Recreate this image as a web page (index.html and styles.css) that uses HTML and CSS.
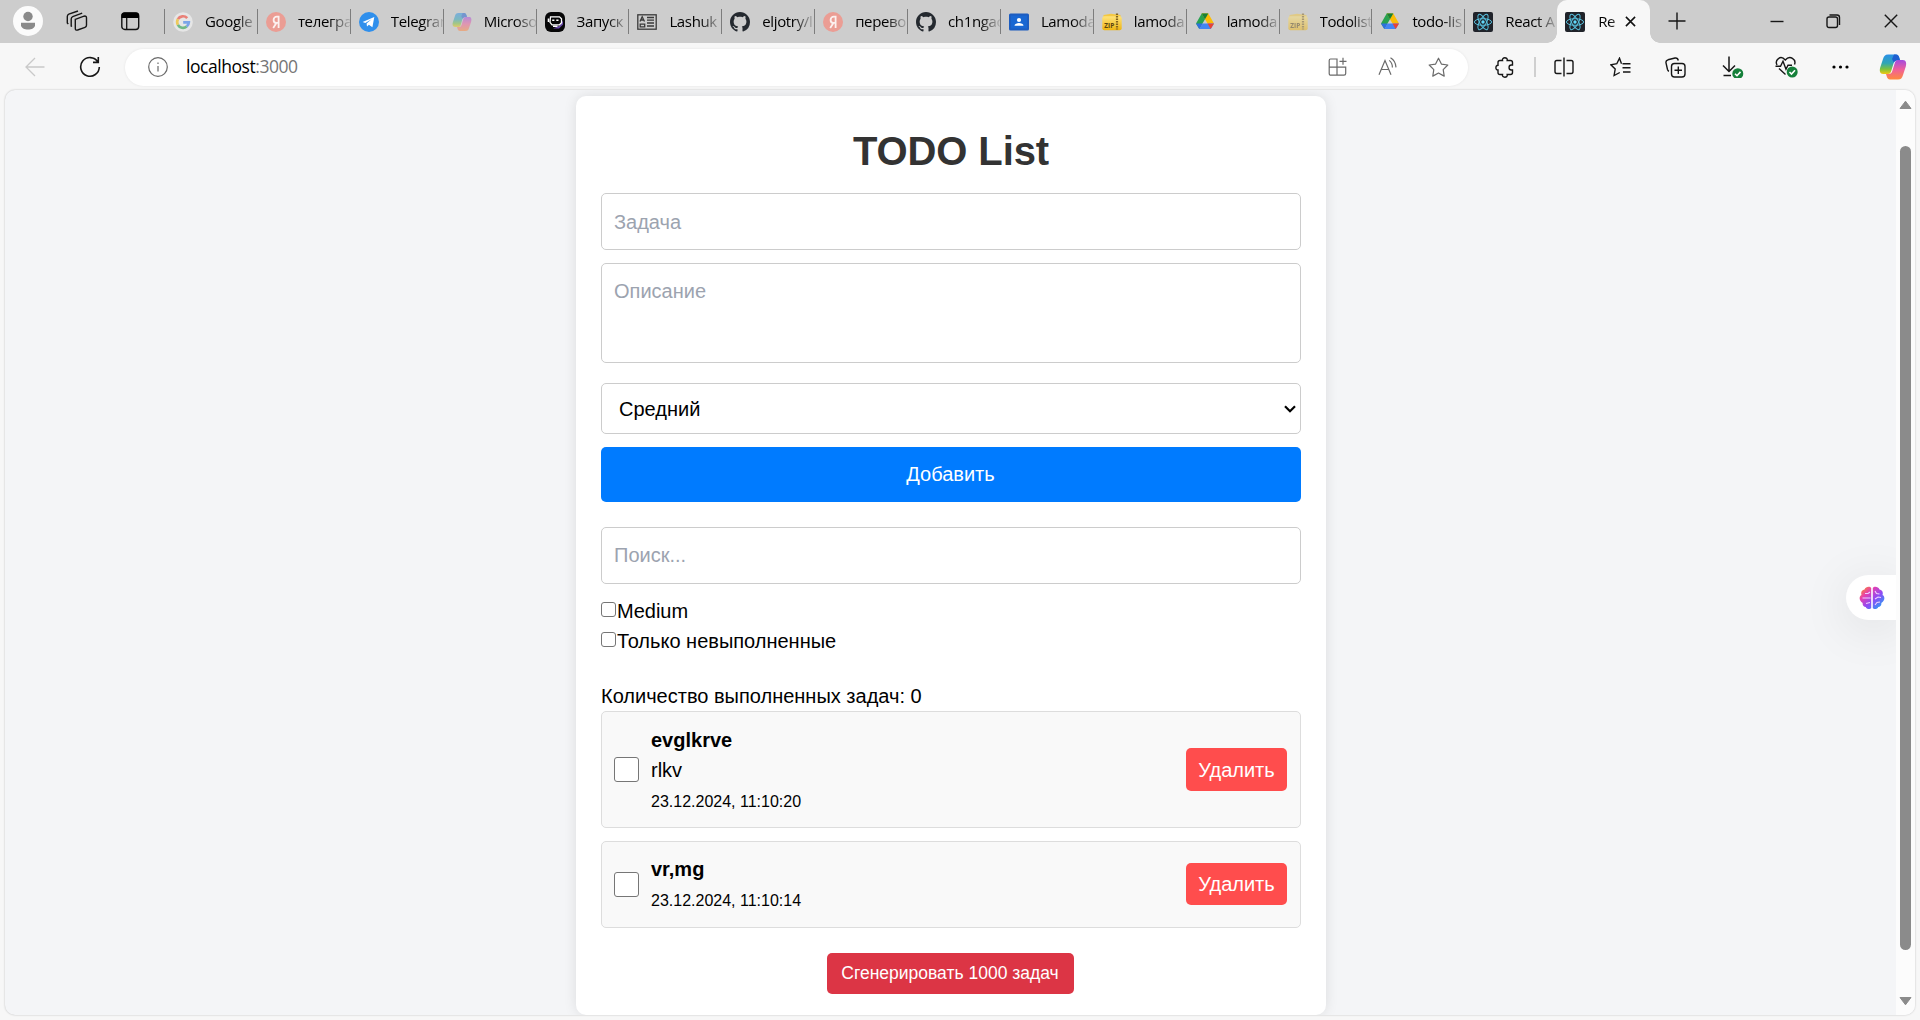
FILE: index.html
```html
<!DOCTYPE html>
<html lang="ru">
<head>
<meta charset="utf-8">
<title>React App</title>
<link rel="stylesheet" href="styles.css">
</head>
<body>
<svg class="defs" width="0" height="0" aria-hidden="true">
  <defs>
    <linearGradient id="g-blue" x1="0" y1="0" x2="0" y2="1"><stop offset="0" stop-color="#2a8fe8"/><stop offset=".45" stop-color="#2fa6b5"/><stop offset=".75" stop-color="#7cc23d"/><stop offset="1" stop-color="#f2c811"/></linearGradient>
    <linearGradient id="g-pink" x1="0" y1="0" x2="0" y2="1"><stop offset="0" stop-color="#a34be0"/><stop offset=".5" stop-color="#f0609a"/><stop offset="1" stop-color="#ff8a3c"/></linearGradient>
    <linearGradient id="g-brain" x1="0" y1="0" x2="1" y2="1"><stop offset=".05" stop-color="#ff8a2a"/><stop offset=".3" stop-color="#e53fb0"/><stop offset=".58" stop-color="#8f4bf5"/><stop offset=".9" stop-color="#2a9df5"/></linearGradient>
    <linearGradient id="g-zip" x1="0" y1="0" x2="0" y2="1"><stop offset="0" stop-color="#ffe37a"/><stop offset="1" stop-color="#eeb512"/></linearGradient>
  </defs>
  <symbol id="i-google" viewBox="0 0 20 20"><circle cx="10" cy="10" r="9.8" fill="#e6e6e6"/><g fill="none" stroke-width="2.7"><path d="M14.2 6.1A5.8 5.8 0 0 0 4.9 7.2" stroke="#e98077"/><path d="M4.9 7.2a5.8 5.8 0 0 0 0 5.6" stroke="#edc95c"/><path d="M4.9 12.8a5.8 5.8 0 0 0 8.8 1.7" stroke="#71b986"/><path d="M13.7 14.5a5.8 5.8 0 0 0 2.1-4.1h-5.6" stroke="#7ba5e8"/></g></symbol>
  <symbol id="i-yandex" viewBox="0 0 20 20"><circle cx="10" cy="10" r="10" fill="#eb9d94"/><path d="M12.6 16V4.7h-1.7c-2 0-3.3 1.2-3.3 3.2 0 1.900 1 3 3 3h2M10.4 10.9 7.2 16" fill="none" stroke="#fff" stroke-opacity=".85" stroke-width="1.8"/></symbol>
  <symbol id="i-telegram" viewBox="0 0 20 20"><circle cx="10" cy="10" r="10" fill="#2f8fec"/><path d="M3.6 9.9 15.3 5.1 13.4 15.3 9.9 12.7 8 14.5 7.6 11.5 12.6 7.3 6.3 11z" fill="#fff"/></symbol>
  <symbol id="i-copilot" viewBox="0 0 28 28"><path d="M9 1.5h8c2 0 2.8 1.5 3.3 3.2L21 7h-2.5c-2.2 0-3.3 1.2-3.9 3.3l-2.3 7.4c-.5 1.8-1.3 3.3-3.3 3.3H4.200C.8 21 .3 18 1.200 14.500L4 6C5 3 6 1.500 9 1.500z" fill="url(#g-blue)"/><path d="M15 1.500h2c2 0 2.800 1.500 3.300 3.200L21 7.500h-2.500c-1.800 0-3 .8-3.600 2.300L13 6z" fill="#1f5fd0"/><path d="M19 26.500h-8c-2 0-2.800-1.500-3.300-3.200L7 21h2.500c2.200 0 3.300-1.200 3.900-3.300l2.300-7.400C16.200 8.500 17 7 19 7h4.800c3.400 0 3.900 3 3 6.500L24 22c-1 3-2 4.500-5 4.500z" fill="url(#g-pink)"/></symbol>
  <symbol id="i-bot" viewBox="0 0 20 20"><rect width="20" height="20" rx="6" fill="#070708"/><path d="M8 16.500h6l4-4v-4l-3 5z" fill="#6a49ad"/><path d="M5.500 4.800h9l2 2v4l-2 2H7l-2-2.500z" fill="none" stroke="#fff" stroke-width="1.300"/><path d="M3.500 6.500v3.500M7.200 8.300h2.200M11.300 8.300h2.200M8 14.300h4.500" stroke="#fff" stroke-width="1.600"/></symbol>
  <symbol id="i-card" viewBox="0 0 20 20"><g fill="none" stroke="#3a3a3a" stroke-width="1.300"><rect x=".8" y="2.800" width="18.400" height="14.400"/><path d="M3 9.500 5.200 4.700 7.500 9.500M3.800 8h2.900M10 5.500h7M10 8.200h7M10 11h7M10 14h7M3.200 12.200h4.500v2.600H3.200z"/></g></symbol>
  <symbol id="i-github" viewBox="0 0 16 16"><path fill="#24292f" d="M8 0C3.580 0 0 3.580 0 8c0 3.540 2.290 6.530 5.470 7.590.4.070.55-.17.55-.38 0-.19-.010-.820-.010-1.490-2.010.370-2.530-.490-2.690-.940-.090-.230-.480-.940-.820-1.130-.280-.150-.680-.520-.010-.530.630-.010 1.080.580 1.230.820.720 1.210 1.870.870 2.330.660.070-.520.280-.870.510-1.070-1.780-.2-3.640-.890-3.640-3.950 0-.870.310-1.590.820-2.150-.080-.2-.360-1.020.080-2.120 0 0 .670-.210 2.200.820.640-.180 1.320-.270 2-.270s1.360.090 2 .270c1.530-1.040 2.200-.820 2.200-.820.440 1.100.160 1.920.080 2.120.510.560.820 1.270.820 2.150 0 3.070-1.870 3.750-3.650 3.950.290.250.540.730.540 1.480 0 1.070-.010 1.930-.010 2.200 0 .210.150.460.550.380A8.010 8.010 0 0 0 16 8c0-4.420-3.580-8-8-8z"/></symbol>
  <symbol id="i-classroom" viewBox="0 0 20 20"><rect y="1.500" width="20" height="17" rx="1.500" fill="#1d5dc0"/><rect x="2" y="3.500" width="16" height="13" fill="#1967d2"/><circle cx="10" cy="8" r="2.100" fill="#fff"/><path d="M5.500 13.800c0-3.600 9-3.600 9 0z" fill="#fff"/></symbol>
  <symbol id="i-zip" viewBox="0 0 20 20"><path d="M1.500 3 9 1.800 18.500 3v3H1.500z" fill="#f3c843"/><rect x=".3" y="4.200" width="19.400" height="14" rx="2" fill="url(#g-zip)"/><path d="M15 1.500v16" stroke="#80621e" stroke-width="2.200" stroke-dasharray="1.500 1"/><text x="2.300" y="16" class="zip-text">ZIP</text></symbol>
  <symbol id="i-drive" viewBox="0 0 20 20"><path d="M6.700 1.500h6.600L4.300 17 1 11.400z" fill="#27a250"/><path d="M6.700 1.500h6.600L19 11.400h-6.500z" fill="#fbbc04"/><path d="M10 7.200 6.700 1.500h6.600z" fill="#188038"/><path d="M4.300 17 7.600 11.400H19L15.700 17z" fill="#4285f4"/><path d="M12.500 11.400H19L15.700 17z" fill="#ea4335"/><path d="M4.300 17 1 11.400h6.600z" fill="#2f6fdf"/></symbol>
  <symbol id="i-react" viewBox="0 0 20 20"><rect width="20" height="20" rx="2" fill="#20232a"/><g fill="none" stroke="#58bfdc" stroke-width="1"><ellipse cx="10" cy="10" rx="8.600" ry="3.300"/><ellipse cx="10" cy="10" rx="8.600" ry="3.300" transform="rotate(60 10 10)"/><ellipse cx="10" cy="10" rx="8.600" ry="3.300" transform="rotate(120 10 10)"/></g><circle cx="10" cy="10" r="1.700" fill="#61dafb"/></symbol>
</svg>

<header class="tabstrip">
  <div class="cell profile"><svg width="30" height="30"><circle cx="15" cy="15" r="15" fill="#fbfbfb"/><circle cx="15" cy="10.500" r="4.700" fill="#8a8a8a"/><path d="M8 16.700h14v2.500c0 5.700-14 5.700-14 0z" fill="#8a8a8a"/></svg></div>
  <div class="cell workspaces"><svg class="line" width="22" height="22" viewBox="0 0 22 22"><path d="M9.300 9.300 18 6.200q2.500-.6 2.500 1.600v7.500q0 1.500-1.500 2L11.600 20q-2.300.7-2.300-1.500zM6 16.500 5.200 16V9q0-1.800 1.500-2.400l9.500-3.400M2.300 14 1.300 13V6.500q0-1.700 1.500-2.300L12 1"/></svg></div>
  <div class="cell actions"><svg width="19" height="19"><rect x=".8" y="1" width="16.900" height="16.500" rx="3" fill="none" stroke="#111" stroke-width="1.400"/><path d="M.5 6V3.500Q.5.500 3.500.500h11.500q3 0 3 3V6z"/><path d="M5.700 6v11" stroke="#111" stroke-width="1.300"/></svg></div>
  <nav class="tabs">
    <div class="tab"><svg><use href="#i-google"/></svg><span>Google</span></div>
    <div class="tab"><svg><use href="#i-yandex"/></svg><span>телегра</span></div>
    <div class="tab"><svg><use href="#i-telegram"/></svg><span>Telegram</span></div>
    <div class="tab"><svg class="faded"><use href="#i-copilot"/></svg><span>Microso</span></div>
    <div class="tab"><svg><use href="#i-bot"/></svg><span>Запуск</span></div>
    <div class="tab"><svg><use href="#i-card"/></svg><span>Lashuk</span></div>
    <div class="tab"><svg><use href="#i-github"/></svg><span>eljotry/l</span></div>
    <div class="tab"><svg><use href="#i-yandex"/></svg><span>перево</span></div>
    <div class="tab"><svg><use href="#i-github"/></svg><span>ch1ngac</span></div>
    <div class="tab"><svg><use href="#i-classroom"/></svg><span>Lamoda</span></div>
    <div class="tab"><svg><use href="#i-zip"/></svg><span>lamoda</span></div>
    <div class="tab"><svg><use href="#i-drive"/></svg><span>lamoda</span></div>
    <div class="tab"><svg class="faded"><use href="#i-zip"/></svg><span>Todolist</span></div>
    <div class="tab"><svg><use href="#i-drive"/></svg><span>todo-lis</span></div>
    <div class="tab"><svg><use href="#i-react"/></svg><span>React A</span></div>
    <div class="tab active"><svg><use href="#i-react"/></svg><span>Re</span><svg class="tab-close" viewBox="0 0 12 12"><path d="m1 1 10 10M11 1 1 11"/></svg></div>
  </nav>
  <div class="cell newtab"><svg class="line" width="18" height="18"><path d="M9 .5v17M.5 9h17"/></svg></div>
  <div class="window-buttons">
    <div class="cell"><svg class="line" width="14" height="14"><path d="M.5 7.500h13"/></svg></div>
    <div class="cell"><svg class="line" width="15" height="15"><rect x="1" y="3" width="10.500" height="10.500" rx="2"/><path d="M3.500 1h7.500Q13.500 1 13.500 3.500V11"/></svg></div>
    <div class="cell"><svg class="line" width="14" height="14"><path d="m.8.800 12.400 12.400M13.200.800.800 13.200"/></svg></div>
  </div>
</header>

<div class="toolbar">
  <div class="cell back"><svg width="20" height="20"><path d="M19.500 10H1M10 1 1 10l9 9" fill="none" stroke="#c9c9c9" stroke-width="1.300"/></svg></div>
  <div class="cell reload"><svg class="line" width="22" height="22" viewBox="0 0 22 22"><path d="M18.800 5.800A9.300 9.300 0 1 0 20.300 11M19.300 1v5.400H14" stroke-width="1.600"/></svg></div>
  <div class="address">
    <svg class="line info" width="20" height="20"><circle cx="10" cy="10" r="9.300"/><path d="M10 9v5.500M10 5.500v1.600"/></svg>
    <div class="url">localhost<span>:3000</span></div>
    <div class="cell"><svg class="line gray" width="20" height="20"><path d="M2.500 2h6.500v16.200H3q-1.800 0-1.800-1.800V3.500Q1.200 2 2.500 2zM1.200 10.200h16.500v6.300q0 1.700-1.700 1.700H9M15 .8v7M11.500 4.300h7"/></svg></div>
    <div class="cell"><svg class="line gray" width="20" height="20"><path d="M1 17.800 7 3.500l6 14.300M3.200 12.500h7.600M11.200 3.400q3.200 2.600 3.200 7M12.500.7q5.200 3 5.500 9.700"/></svg></div>
    <div class="cell"><svg class="line gray" width="21" height="21" viewBox="0 0 21 21"><path d="m10.500 1.200 2.900 5.900 6.400.9-4.600 4.600 1 6.500-5.700-3.100-5.700 3.100 1-6.500L1.200 8l6.400-.9z" stroke-linejoin="round"/></svg></div>
  </div>
  <div class="cell puzzle"><svg class="line" width="20" height="21" viewBox="0 0 20 21"><path d="M3 5.500q0-2 2-2h2.500C7 1.500 8.500.8 9.800.8s2.900.7 2.400 2.700h3.300q2 0 2 2V8h-1.200c-3 0-3 5 0 5h1.200v2.500q0 2-2 2h-3.300c.5 2-1 2.700-2.400 2.700s-2.800-.7-2.300-2.700H5q-2 0-2-2V13C.2 13.400.2 8.200 3 8.200z"/></svg></div>
  <i class="rule"></i>
  <div class="cell w56"><svg class="line" width="20" height="20"><path d="M7.500 3.500H2.800Q1 3.500 1 5.500v9Q1 16.500 2.800 16.500h4.700M12.500 3.500h4.700Q19 3.500 19 5.500v9q0 2-1.800 2h-4.700M10 .500v19"/></svg></div>
  <div class="cell w56"><svg class="line" width="21" height="20"><path d="M11.500 6.700 9.500 1.200 6.800 6.700.800 7.800l4.400 4.300L4.100 18.500l5.700-3M12.500 6.700h8M12.500 10.800h8M13 15h7.500"/></svg></div>
  <div class="cell w55"><svg class="line" width="21" height="21"><rect x="6.500" y="6.500" width="13.500" height="13.500" rx="3"/><path d="M13.300 9.500v7.500M9.500 13.300h7.500M4 14.200Q3 14 2.500 12.500L1 5.800Q.6 3.500 3 2.800L10 1q2.700-.5 3.300 2.500"/></svg></div>
  <div class="cell w60"><svg class="line" width="22" height="22" viewBox="0 0 22 22"><path d="M7 .5v15M1 9.500l6 6 6-6M1.500 19.500h7.500" stroke-width="1.500"/><circle cx="15.800" cy="17.700" r="5.500" class="ok"/><path d="m13 17.700 2 2 3.500-3.800" class="tick"/></svg></div>
  <div class="cell w46"><svg class="line" width="23" height="22" viewBox="0 0 23 22"><path d="M2 9C-.5 4 5.500-1.500 10.300 4 15-1.500 21.500 3.500 19.500 8.500M.5 10.200h5l2.500-5 3 8 2-4h4M4 12.500l6.500 6"/><circle cx="17.200" cy="16" r="5.500" class="ok"/><path d="m14.500 16 2 2 3.500-3.800" class="tick"/></svg></div>
  <div class="cell w62"><svg width="17" height="4"><circle cx="2" cy="2" r="1.600"/><circle cx="8.500" cy="2" r="1.600"/><circle cx="15" cy="2" r="1.600"/></svg></div>
  <div class="cell w44"><svg width="28" height="28"><use href="#i-copilot"/></svg></div>
</div>

<div class="viewport">
  <main class="page">
    <section class="card">
      <h1>TODO List</h1>
      <input class="field title" type="text" placeholder="Задача">
      <textarea class="field area" placeholder="Описание"></textarea>
      <div class="select field"><span>Средний</span><svg width="12" height="8"><path d="m1 1.200 5 5 5-5"/></svg></div>
      <button class="add">Добавить</button>
      <input class="field search" type="text" placeholder="Поиск...">
      <label class="filter"><input type="checkbox">Medium</label>
      <label class="filter"><input type="checkbox">Только невыполненные</label>
      <p class="count">Количество выполненных задач: 0</p>
      <ul class="tasks">
        <li><input type="checkbox"><div class="info-col"><b>evglkrve</b><span>rlkv</span><small>23.12.2024, 11:10:20</small></div><button class="delete">Удалить</button></li>
        <li><input type="checkbox"><div class="info-col"><b>vr,mg</b><small>23.12.2024, 11:10:14</small></div><button class="delete">Удалить</button></li>
      </ul>
      <button class="generate">Сгенерировать 1000 задач</button>
    </section>
    <div class="assistant"><svg width="26" height="24" viewBox="0 0 26 24"><path fill="url(#g-brain)" d="M12.200 2v20c-1 1.500-4.500 1.500-5.500-1-2 0-3.500-2-3-4C0 15-.3 10.500 2.500 9 1.500 6 3 3.800 5.500 3.500 6.500.500 11 0 12.200 2zM13.800 2v20c1 1.500 4.500 1.500 5.500-1 2 0 3.500-2 3-4 3.700-2 4-6.500 1.200-8 1-3-.5-5.200-3-5.500-1-3-5.500-3.500-6.700-1.500z"/><path d="M3.500 12h8M6 7.500h3l2-1.500M7 17.500l4-1M16 5l1.500 2.500 3 .5M16 13l3-2 3 .5M16 19l2-2.500 3-.5" fill="none" stroke="#f0cfff" stroke-width="1.100"/></svg></div>
  </main>
  <aside class="scrollbar">
    <svg width="13" height="10"><path d="M6.500 1.200 12 8.500H1z"/></svg>
    <div class="thumb"></div>
    <svg width="13" height="10"><path d="M6.500 8.800 12 1.500H1z"/></svg>
  </aside>
</div>
</body>
</html>
```
FILE: styles.css
```css
* { box-sizing: border-box; }

body {
  margin: 0;
  width: 1920px;
  height: 1020px;
  overflow: hidden;
  display: flex;
  flex-direction: column;
  background: #f7f7f7;
  font-family: "Liberation Sans", Arial, sans-serif;
  font-size: 20px;
  line-height: 30px;
  color: #000;
}

svg { display: block; flex: none; }
.defs { position: absolute; }
.cell { display: flex; align-items: center; justify-content: center; flex: none; }
.line { fill: none; stroke: #161616; stroke-width: 1.4; }
.gray, .info { stroke: #6a6a6a; stroke-width: 1.2; }
.zip-text { font: bold 6.5px "Open Sans", sans-serif; fill: #5b4510; }

/* Tab strip */
.tabstrip {
  height: 43px;
  flex: none;
  display: flex;
  background: #cdcdcd;
  font-family: "Open Sans", "Noto Sans", sans-serif;
  font-size: 15px;
  line-height: 20px;
}
.profile { width: 56px; padding-bottom: 1px; }
.workspaces { width: 42px; padding-bottom: 1px; }
.actions { width: 66px; padding: 0 2px 1px 0; }
.tabs {
  width: 1486px;
  flex: none;
  display: grid;
  grid-template-columns: repeat(16, minmax(0, 1fr));
}
.tab {
  min-width: 0;
  height: 25px;
  margin-top: 9px;
  padding-left: 8px;
  display: flex;
  align-items: center;
  border-left: 1px solid #7d7d7d;
}
.tab svg { width: 20px; height: 20px; }
.tab span {
  margin: -2px 0 0 12px;
  flex: 1;
  min-width: 0;
  white-space: nowrap;
  overflow: hidden;
  letter-spacing: -.35px;
  mask-image: linear-gradient(90deg, #000 60%, transparent 105%);
}
.tab .faded { opacity: .5; }
.tab.active {
  position: relative;
  height: 43px;
  margin: 0;
  padding: 0 14px 0 8px;
  border-left: 0;
  border-radius: 10px 10px 0 0;
  background: #f7f7f7;
}
.tab.active::before, .tab.active::after {
  content: "";
  position: absolute;
  bottom: 0;
  width: 10px;
  height: 10px;
}
.tab.active::before { left: -10px; background: radial-gradient(circle at 0 0, #cdcdcd 9.5px, #f7f7f7 10px); }
.tab.active::after { right: -10px; background: radial-gradient(circle at 100% 0, #cdcdcd 9.5px, #f7f7f7 10px); }
.tab.active span { mask-image: linear-gradient(90deg, #000 40%, #0008 80%); margin-left: 13px; }
.tab .tab-close { width: 11px; height: 11px; fill: none; stroke: #111; stroke-width: 1.7; }
.newtab { width: 54px; padding-bottom: 1px; }
.window-buttons { display: flex; margin-left: auto; }
.window-buttons .cell { width: 57px; padding: 0 2px 1px 0; }

/* Toolbar */
.toolbar { height: 47px; padding-top: 1px; flex: none; display: flex; align-items: center; }
.toolbar > .cell { height: 46px; }
.back { width: 70px; }
.reload { width: 40px; }
.address {
  width: 1343px;
  height: 37px;
  margin-left: 15px;
  padding: 0 5px 0 23px;
  display: flex;
  align-items: center;
  border-radius: 19px;
  background: #fff;
  box-shadow: 0 0 3px rgba(0, 0, 0, .08);
}
.address .cell { width: 50px; }
.url {
  flex: 1;
  margin: -2px 0 0 18px;
  font: 17.5px/24px "Open Sans", "Noto Sans", sans-serif;
  letter-spacing: -.45px;
}
.url span { color: #767676; }
.puzzle { width: 66px; padding-left: 7px; }
.rule { width: 2px; height: 20px; background: #cfcfcf; }
.w44 { width: 44px; }
.w46 { width: 46px; }
.w55 { width: 55px; }
.w56 { width: 56px; }
.w60 { width: 60px; }
.w62 { width: 62px; }
.ok { fill: #15803a; stroke: none; }
.tick { stroke: #fff; stroke-width: 1.6; }

/* Browser viewport */
.viewport {
  height: 925px;
  margin: 0 5px;
  flex: none;
  display: flex;
  overflow: hidden;
  border-radius: 10px;
  background: #f4f5f7;
  box-shadow: 0 0 2px rgba(0, 0, 0, .25);
}
.page { position: relative; flex: 1; padding-top: 6px; overflow: hidden; }

.card {
  width: 750px;
  height: 919px;
  margin-left: 571px;
  padding: 25px;
  display: flex;
  flex-direction: column;
  border-radius: 10px;
  background: #fff;
  box-shadow: 0 0 13px rgba(0, 0, 0, .1);
}
h1 {
  margin: 0 0 12px;
  font-size: 40px;
  line-height: 60px;
  letter-spacing: -.1px;
  text-align: center;
  color: #333;
}
.field {
  width: 100%;
  height: 57px;
  margin: 0;
  padding: 0 12px;
  border: 1px solid #ccc;
  border-radius: 5px;
  background: #fff;
  font: inherit;
  outline: 0;
  flex: none;
}
.field::placeholder { color: #9ca3af; opacity: 1; }
.title { padding-top: 2px; }
.area { height: 100px; margin: 13px 0 20px; padding-top: 12px; resize: none; }
.select { height: 51px; padding: 0 4px 0 17px; display: flex; align-items: center; justify-content: space-between; }
.select path { fill: none; stroke: #000; stroke-width: 2.2; }

button { padding: 0; border: 0; border-radius: 5px; color: #fff; font: inherit; flex: none; }
.add { height: 55px; margin: 13px 0 25px; padding: 0 1px 2px 0; background: #007bff; }
.search { margin-bottom: 12px; }
.filter { height: 30px; display: flex; }
[type="checkbox"] {
  appearance: none;
  width: 15px;
  height: 15px;
  margin: 6px 1px 0 0;
  border: 1px solid #767676;
  border-radius: 3px;
  background: #fff;
  flex: none;
}
.count { margin: 25px 0 0; height: 30px; flex: none; }

.tasks { margin: 0; padding: 0; list-style: none; display: flex; flex-direction: column; gap: 13px; }
.tasks li {
  height: 87px;
  padding: 0 13px 0 12px;
  display: flex;
  align-items: center;
  border: 1px solid #ddd;
  border-radius: 5px;
  background: #f9f9f9;
}
.tasks li:first-child { height: 117px; }
.tasks [type="checkbox"] { width: 25px; height: 25px; margin: 0 12px 0 0; }
.info-col { flex: 1; display: flex; flex-direction: column; }
.info-col small { font-size: 16px; line-height: 30px; padding-top: 2px; margin-bottom: -2px; }
.tasks li:last-child .info-col { padding-bottom: 1px; }
.delete { width: 101px; height: 43px; background: #ff4d4d; }
.tasks li:last-child .delete { height: 42px; margin-bottom: 1px; }
.generate {
  width: 247px;
  height: 41px;
  margin: 25px 2px 0 0;
  padding-bottom: 1px;
  align-self: center;
  background: #dc3545;
  font-size: 17.5px;
}

.assistant {
  position: absolute;
  right: 0;
  top: 485px;
  width: 50px;
  height: 45px;
  padding-left: 13px;
  display: flex;
  align-items: center;
  border-radius: 23px 0 0 23px;
  background: #fff;
  box-shadow: 0 8px 50px rgba(0, 0, 0, .1);
}

.scrollbar {
  width: 19px;
  padding: 10px 0 9px;
  display: flex;
  flex-direction: column;
  align-items: center;
  background: #fcfcfc;
}
.scrollbar svg { fill: #8b8b8b; stroke: #8b8b8b; stroke-linejoin: round; }
.thumb { width: 11px; height: 804px; margin: 36px 0 auto; border-radius: 6px; background: #8b8b8b; }
```
